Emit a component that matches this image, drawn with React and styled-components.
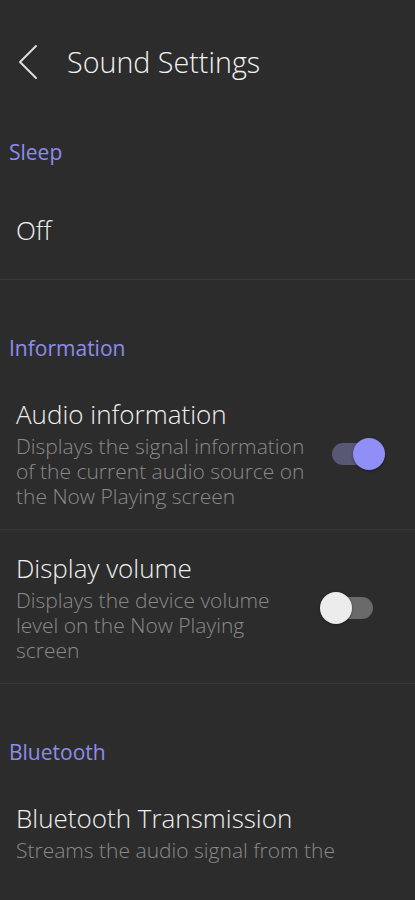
import React, { useState } from "react";
import styled, { createGlobalStyle } from "styled-components";

const Global = createGlobalStyle`
  html, body { margin: 0; padding: 0; background: #2c2c2c; }
  body { font-family: "Open Sans", "Noto Sans", sans-serif; -webkit-font-smoothing: antialiased; }
`;

const Page = styled.div`
  width: 415px;
  min-height: 900px;
  background: #2c2c2c;
  color: #f0f0f0;
  overflow: hidden;
`;

const Header = styled.header`
  display: flex;
  align-items: center;
  height: 44px;
  padding-top: 40px;
  padding-left: 16px;
  gap: 27px;
`;

const BackButton = styled.button`
  display: flex;
  align-items: center;
  justify-content: center;
  width: 24px;
  height: 44px;
  padding: 0;
  border: 0;
  background: none;
  cursor: pointer;
`;

const Title = styled.h1`
  margin: 0;
  font-size: 28.7px;
  font-weight: 300;
  color: #f2f2f2;
  line-height: 44px;
`;

const Section = styled.section`
  padding-top: 40px;
`;

const SectionTitle = styled.h2`
  margin: 0;
  padding-left: 9px;
  height: 56px;
  line-height: 56px;
  font-size: 21px;
  font-weight: 400;
  color: #8d8cea;
`;

const Row = styled.div`
  display: flex;
  align-items: center;
  gap: 8px;
  padding: ${(p) => (p.$single ? "0 30px 0 16px" : "23px 30px 20px 16px")};
  min-height: ${(p) => (p.$single ? "100px" : "0")};
  box-sizing: border-box;
  border-bottom: ${(p) => (p.$last ? "none" : "1px solid #393939")};
`;

const Texts = styled.div`
  flex: 1;
  display: flex;
  flex-direction: column;
  gap: 5px;
`;

const ItemTitle = styled.div`
  font-size: 26px;
  font-weight: 300;
  line-height: 30px;
  color: #f0f0f0;
`;

const ItemDesc = styled.div`
  font-size: 21px;
  font-weight: 300;
  line-height: 25px;
  color: #8a8a8a;
`;

const Switch = styled.button`
  position: relative;
  flex: none;
  width: 65px;
  height: 32px;
  padding: 0;
  border: 0;
  background: none;
  cursor: pointer;
`;

const Track = styled.span`
  position: absolute;
  left: 12px;
  right: 12px;
  top: 5px;
  height: 22px;
  border-radius: 11px;
  background: ${(p) => (p.$on ? "#585874" : "#6a6a6a")};
`;

const Thumb = styled.span`
  position: absolute;
  top: 0;
  left: ${(p) => (p.$on ? "33px" : "0")};
  width: 32px;
  height: 32px;
  border-radius: 50%;
  background: ${(p) => (p.$on ? "#8f8ff7" : "#ececec")};
  box-shadow: 0 1px 3px rgba(0, 0, 0, 0.35);
`;

function Toggle({ initial }) {
  const [on, setOn] = useState(initial);
  return (
    <Switch role="switch" aria-checked={on} onClick={() => setOn(!on)}>
      <Track $on={on} />
      <Thumb $on={on} />
    </Switch>
  );
}

export default function App() {
  return (
    <Page>
      <Global />
      <Header>
        <BackButton aria-label="Back">
          <svg width="22" height="36" viewBox="0 0 22 36" fill="none">
            <path d="M19 2 L3 18 L19 34" stroke="#dcdcdc" strokeWidth="2" strokeLinecap="round" strokeLinejoin="round" />
          </svg>
        </BackButton>
        <Title>Sound Settings</Title>
      </Header>

      <Section>
        <SectionTitle>Sleep</SectionTitle>
        <Row $single>
          <ItemTitle>Off</ItemTitle>
        </Row>
      </Section>

      <Section>
        <SectionTitle>Information</SectionTitle>
        <Row>
          <Texts>
            <ItemTitle>Audio information</ItemTitle>
            <ItemDesc>Displays the signal information of the current audio source on the Now Playing screen</ItemDesc>
          </Texts>
          <Toggle initial={true} />
        </Row>
        <Row>
          <Texts>
            <ItemTitle>Display volume</ItemTitle>
            <ItemDesc>Displays the device volume level on the Now Playing screen</ItemDesc>
          </Texts>
          <Toggle initial={false} />
        </Row>
      </Section>

      <Section>
        <SectionTitle>Bluetooth</SectionTitle>
        <Row $last>
          <Texts>
            <ItemTitle>Bluetooth Transmission</ItemTitle>
            <ItemDesc>Streams the audio signal from the</ItemDesc>
          </Texts>
        </Row>
      </Section>
    </Page>
  );
}
